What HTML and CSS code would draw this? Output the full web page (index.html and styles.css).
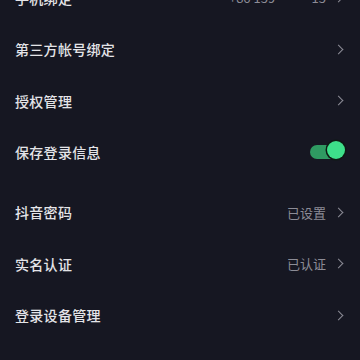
FILE: index.html
```html
<!DOCTYPE html>
<html>
<head>
<meta charset="utf-8">
<link rel="stylesheet" href="styles.css">
</head>
<body>
<div class="page">
  <div class="group first">
    <div class="row"><span class="label">手机绑定</span><span class="right"><span class="value">+86 159******15</span><span class="chev"></span></span></div>
    <div class="row"><span class="label">第三方帐号绑定</span><span class="right"><span class="chev"></span></span></div>
    <div class="row"><span class="label">授权管理</span><span class="right"><span class="chev"></span></span></div>
    <div class="row"><span class="label">保存登录信息</span><span class="right"><span class="toggle"><span class="knob"></span></span></span></div>
  </div>
  <div class="group">
    <div class="row"><span class="label">抖音密码</span><span class="right"><span class="value">已设置</span><span class="chev"></span></span></div>
    <div class="row"><span class="label">实名认证</span><span class="right"><span class="value">已认证</span><span class="chev"></span></span></div>
    <div class="row"><span class="label">登录设备管理</span><span class="right"><span class="chev"></span></span></div>
  </div>
</div>
</body>
</html>
```
FILE: styles.css
```css
html, body {
  margin: 0;
  padding: 0;
  background: #161722;
}
body {
  width: 360px;
  height: 360px;
  overflow: hidden;
  font-family: "Noto Sans CJK SC", "Noto Sans", sans-serif;
}
.page {
  display: flex;
  flex-direction: column;
  gap: 8.5px;
}
.group.first {
  margin-top: -28px;
}
.row {
  height: 51.5px;
  display: flex;
  align-items: center;
  justify-content: space-between;
  padding: 0 15px 0 15px;
}
.label {
  color: #e4e4e8;
  font-size: 14px;
  font-weight: 500;
  letter-spacing: 0.3px;
}
.right {
  display: flex;
  align-items: center;
  gap: 9px;
}
.value {
  color: #8c8c96;
  font-size: 13px;
}
.chev {
  width: 6px;
  height: 6px;
  border-right: 1.6px solid #8c8c96;
  border-top: 1.6px solid #8c8c96;
  transform: rotate(45deg);
  margin-right: 3px;
}
.toggle {
  position: relative;
  width: 32px;
  height: 14px;
  border-radius: 7px;
  background: #2f9a62;
  margin-right: 3px;
}
.knob {
  position: absolute;
  right: -3px;
  top: -4px;
  width: 18px;
  height: 18px;
  border-radius: 50%;
  background: #3ee08a;
  box-shadow: 0 0 0 1.5px #0e1a14;
}
```
